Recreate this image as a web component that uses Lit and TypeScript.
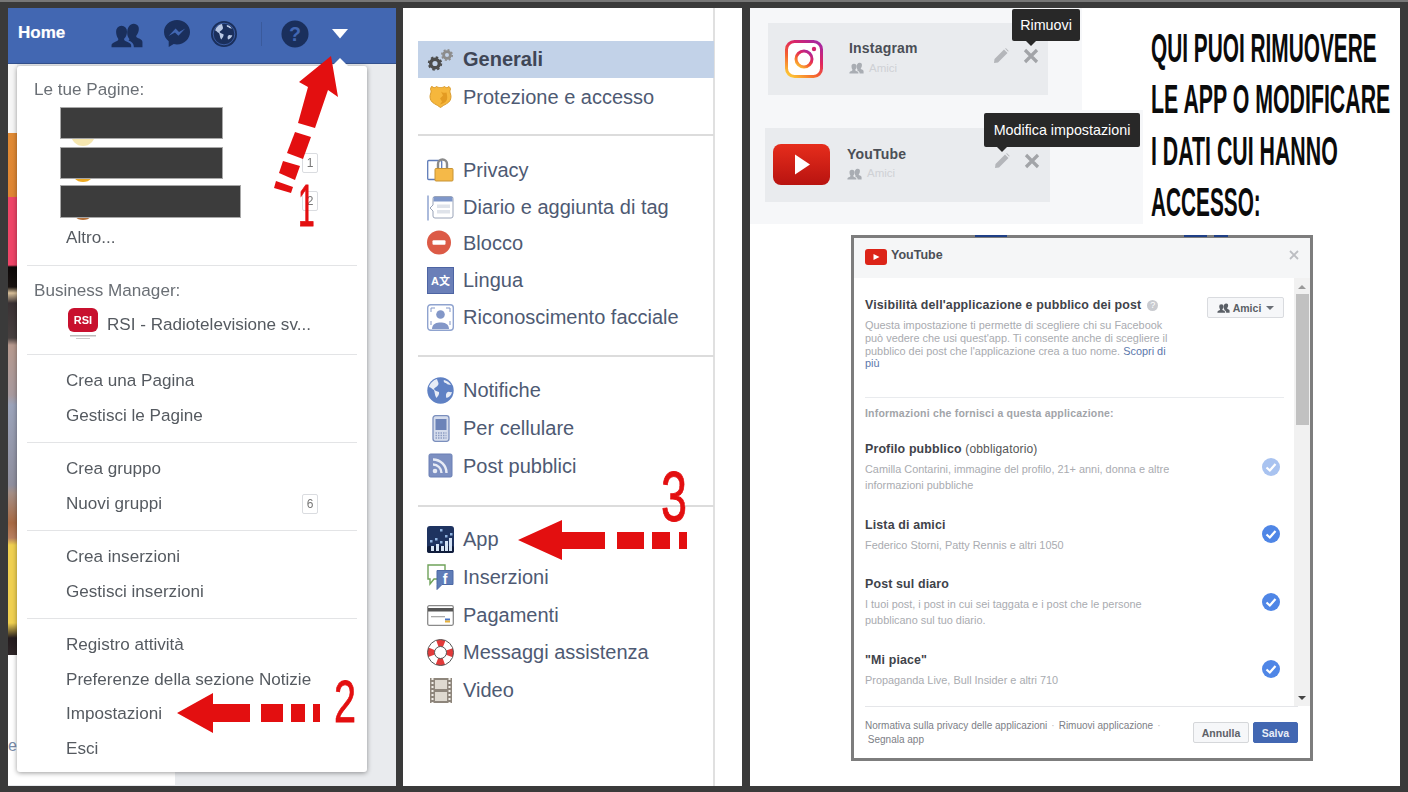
import { LitElement, html, css, svg } from "lit";
import { customElement } from "lit/decorators.js";

const DARK = "#1a2f5c";
const RED = "#e30f10";

const people = (c: string) => svg`<path fill=${c} d="M6 3.2a3 3 0 0 1 3 3.2c0 1.6-.8 3.2-1.5 3.8-.3.5 0 1 .6 1.3 1.7.7 3.2 1.2 3.2 2.6V15H.5v-.9c0-1.4 1.4-1.9 3-2.6.7-.3.9-.8.6-1.3C3.700 9.600 3 8 3 6.400a3 3 0 0 1 3-3.200z"/><path fill=${c} d="M12.700 2a2.700 2.700 0 0 1 2.800 3c0 1.500-.7 2.900-1.300 3.500-.3.400-.1 1 .5 1.200 1.400.600 2.800 1.100 2.800 2.400V15h-4.700c0-2-1.100-3-3-3.700.6-.3.6-.7.300-1.100-.7-.8-1-2-1-3.300C9.100 4.400 10.500 2 12.700 2z"/>`;

const ico = {
  friends: html`<svg class="hi" style="width:34px;height:28px" viewBox="0 0 18 15.400">${people(DARK)}</svg>`,
  msgr: html`<svg class="hi" viewBox="0 0 28 30"><path fill=${DARK} d="M14 1C6.800 1 1 6.400 1 13c0 3.700 1.800 7 4.700 9.200V28l5-2.900c1 .2 2.100.400 3.300.400 7.200 0 13-5.600 13-12.500S21.200 1 14 1z"/><path fill="#4267b2" d="M15.400 16.800 12 13.400 5.600 17l7-7.500 3.400 3.400 6.300-3.500z"/></svg>`,
  globe: html`<svg class="hi" viewBox="0 0 28 30"><circle cx="14" cy="15" r="13" fill=${DARK}/><circle cx="14" cy="15" r="10.800" fill="none" stroke="#4267b2" stroke-width=".8"/><path fill="#b9c8e4" d="M12 5c-3 .5-6 3-6.800 6.500 1.800.2 2 2 3.800 2.500 1.200 2.300.6 4.400 2.300 6.500 1-1.800 2.700-3 2.200-5.300-1.800-.8-3.300-.7-4-2.200 1-1.800 3.300-2 3.500-3.800.1-1.200-.7-2.300-1-4.200zM17 6c-.8 1.200.2 2.300 1.600 2.200.8 1.300 2.300 1 3.400 1.500-1-1.800-2.800-3.200-5-3.700zM19 16c-1.500.5-1.800 2.600-1 4.500 1.800-.4 3.800-2 4.300-4.200-1 .3-2.300-.7-3.300-.3z"/></svg>`,
  help: html`<svg class="hi" viewBox="0 0 30 30"><circle cx="15" cy="15" r="14.500" fill=${DARK}/><text x="15" y="22" text-anchor="middle" fill="#4267b2" font-family="Liberation Sans" font-weight="700" font-size="21">?</text></svg>`,
  caret: html`<svg style="width:16px;height:10px;display:block" viewBox="0 0 16 10"><path fill="#fff" d="M0 0h16L8 9.500z"/></svg>`,
  rsi: html`<svg class="rsi" viewBox="0 0 32 34"><rect x="1" y="0" width="30" height="24" rx="6" fill="#c8102e"/><text x="16" y="16" text-anchor="middle" fill="#fff" font-family="Liberation Sans" font-weight="700" font-size="11">RSI</text><rect x="3" y="27" width="26" height="1.500" fill="#bbb"/><rect x="9" y="30" width="14" height="1" fill="#ccc"/></svg>`,
  gears: html`<svg viewBox="0 0 27 24"><g fill="none"><circle cx="8" cy="16" r="4.300" stroke="#4d4d4d" stroke-width="3.400"/><circle cx="8" cy="16" r="6.300" stroke="#4d4d4d" stroke-width="1.800" stroke-dasharray="2.500 2.450"/><circle cx="20" cy="7.500" r="3.400" stroke="#8c8c8c" stroke-width="2.800"/><circle cx="20" cy="7.500" r="5.200" stroke="#8c8c8c" stroke-width="1.600" stroke-dasharray="2 2.080"/></g></svg>`,
  shield: html`<svg viewBox="0 0 27 26"><path fill="#f6b73c" stroke="#d99a2b" d="M5 2c1.500 1.500 3 1.500 4.500 0 1.500 1 2.500 1 4 1s2.500 0 4-1c1.500 1.500 3 1.500 4.500 0 1 1 1.500 2 1.500 3-1 1.500-.5 3 0 4.500.8 2 .5 4.500-.5 6.500-1.500 3-5 3.500-9.500 7-4.500-3.500-8-4-9.500-7-1-2-1.300-4.500-.5-6.500.5-1.500 1-3-.0-4.500 0-1 .5-2 1-3z"/><path fill="#e39b22" d="M14 7l2 4-3 3 2 3-2 3c3-1 6-2 7-5 .5-2 0-5-.5-7-2 .5-4 .5-5.500-1z"/></svg>`,
  lock: html`<svg viewBox="0 0 27 26"><rect x=".7" y="3" width="14" height="19" rx="1" fill="#fff" stroke="#5f7cb8" stroke-width="1.300"/><path fill="none" stroke="#8a8a8a" stroke-width="2.400" d="M11 12V6.500a4.500 4.500 0 0 1 9 0V12"/><rect x="8" y="11" width="18" height="12.500" rx="1" fill="#f5b948" stroke="#c79334"/></svg>`,
  timeline: html`<svg viewBox="0 0 27 26"><path stroke="#7f97c9" stroke-width="1.300" d="M1 1v25"/><path fill="#fff" stroke="#9aa4b8" d="M6 10.500 3 13.500l3 3V21.500a2 2 0 0 0 2 2h16a2 2 0 0 0 2-2V4a2 2 0 0 0-2-2H8a2 2 0 0 0-2 2z"/><path fill="#7f97c9" d="M6.500 2.500h19V7h-19z"/><path fill="#dfe3ea" d="M10 10h13v3.500H10zM10 15.500h13V19H10z"/></svg>`,
  block: html`<svg viewBox="0 0 27 26"><circle cx="12" cy="12" r="12" fill="#dc5a46"/><rect x="5.500" y="9.800" width="13" height="4.400" rx="1" fill="#fff"/></svg>`,
  lang: html`<svg viewBox="0 0 27 27"><rect x=".5" y=".5" width="26" height="26" fill="#6a7fb8" stroke="#4d64a3"/><text x="13.500" y="18" text-anchor="middle" fill="#fff" font-family="Liberation Sans, Noto Sans CJK SC, sans-serif" font-size="11" font-weight="700">A文</text></svg>`,
  face: html`<svg viewBox="0 0 27 27"><rect x=".7" y=".7" width="25.600" height="25.600" rx="3" fill="#fff" stroke="#8fa3cf" stroke-width="1.400"/><circle cx="13.500" cy="10.500" r="4.300" fill="#8397c8"/><path fill="#8397c8" d="M5 25c0-5.500 5-6.500 8.500-6.500S22 19.500 22 25z"/><path fill="none" stroke="#8397c8" d="M4 8V4h4M19 4h4v4M4 17v4M23 17v4"/></svg>`,
  globe2: html`<svg viewBox="0 0 27 27"><circle cx="13.500" cy="13.500" r="13.200" fill="#5f81c4"/><path fill="#fff" opacity=".85" d="M10 2c-3.500 1-7 4-8 8 2 0 3 2.500 5 3 1 3 .5 5 2.500 8 1.500-2 3-3.500 2.500-6-2-1-4-1-5-3 1-2 4-2.500 4.500-5 .1-1.500-1-3-1.500-5zM17 3c-1 1.500.5 3 2 3 1 1.500 3 1.500 5 2-1.500-2.500-4-4.500-7-5zM21 15c-2 .5-2.500 3.500-1.500 6 2.500-.5 5-3 5.500-6-1.500.5-3-.5-4 0z"/></svg>`,
  phone: html`<svg viewBox="0 0 27 27"><rect x="6" y=".7" width="16" height="25.600" rx="2.500" fill="#d5dcec" stroke="#7b8fbd" stroke-width="1.300"/><rect x="8.500" y="4" width="11" height="11" fill="#6c83b8"/><path stroke="#8c9cc2" stroke-width="1.500" stroke-dasharray="1.500 1" d="M8.500 18h11M8.500 20.500h11M8.500 23h11"/></svg>`,
  rss: html`<svg viewBox="0 0 27 27"><rect x="2" y="1" width="23" height="23" rx="1.500" fill="#7c8fc1" stroke="#6a7fb4"/><circle cx="8" cy="18" r="2.300" fill="#e7ebf5"/><path fill="none" stroke="#e7ebf5" stroke-width="2.400" d="M6 11.500a8.500 8.500 0 0 1 8.500 8.500M6 6.500A13.500 13.500 0 0 1 19.500 20"/></svg>`,
  app: html`<svg viewBox="0 0 27 27"><rect width="27" height="27" rx="3" fill="#1e3360"/><rect y="20" width="27" height="7" rx="2" fill="#101d3c"/><g fill="#8fb3e0"><rect x="3" y="14" width="2.500" height="2.500"/><rect x="8" y="12" width="2.500" height="2.500"/><rect x="13" y="15" width="2.500" height="2.500"/><rect x="18" y="9" width="2.500" height="2.500"/><rect x="13" y="3" width="2.500" height="2.500"/><rect x="23" y="7" width="2.500" height="2.500"/></g><g fill="#d5e3f4"><rect x="4" y="20" width="3" height="5"/><rect x="9" y="18" width="3" height="7"/><rect x="14" y="20" width="3" height="5"/><rect x="18" y="15" width="3" height="10"/><rect x="22" y="12" width="3" height="13"/></g></svg>`,
  ads: html`<svg viewBox="0 0 27 27"><path fill="#fff" stroke="#6fa25a" stroke-width="1.400" d="M1 1h17v14H7l-4 5V15H1z"/><path fill="#5f7db8" stroke="#4d69a5" d="M10 7h16v14H15l-5 5V21z" transform="translate(0 -.5)"/><text x="18" y="20" text-anchor="middle" fill="#fff" font-family="Liberation Sans" font-weight="700" font-size="14">f</text></svg>`,
  card: html`<svg viewBox="0 0 27 21"><rect x=".7" y=".7" width="25.600" height="19.600" rx="1.500" fill="#fff" stroke="#8a8a8a" stroke-width="1.300"/><rect x="1" y="3" width="25" height="3.500" fill="#555"/><rect x="4" y="11" width="14" height="1.300" fill="#aaa"/><rect x="18" y="13.500" width="5" height="2" fill="#4a75c4"/><rect x="18" y="15.500" width="5" height="2" fill="#e8b23a"/></svg>`,
  buoy: html`<svg viewBox="0 0 27 27"><circle cx="13.500" cy="13.500" r="9.500" fill="none" stroke="#fff" stroke-width="7"/><circle cx="13.500" cy="13.500" r="9.500" fill="none" stroke="#e23a3a" stroke-width="7" stroke-dasharray="7 7.920" stroke-dashoffset="3.500"/><circle cx="13.500" cy="13.500" r="13" fill="none" stroke="#555" stroke-width="1"/><circle cx="13.500" cy="13.500" r="6" fill="none" stroke="#555" stroke-width="1"/></svg>`,
  film: html`<svg viewBox="0 0 27 27"><rect x="3" y="1" width="22" height="25" fill="#8e867c"/><path fill="#ded9d0" d="M8 3h12v9H8zM8 15h12v9H8z"/><path stroke="#f3f0ea" stroke-width="2" stroke-dasharray="2 2" d="M5.500 1v25M22.500 1v25"/></svg>`,
  pencil: html`<svg viewBox="0 0 16 16"><path fill="#b4b6ba" d="M11 1.500 14.500 5 5 14.500 1 15l.5-4zM12 .5l1-.3 2.500 2.500-.3 1z"/></svg>`,
  close: html`<svg viewBox="0 0 16 16"><path stroke="#a2a4a8" stroke-width="3.200" d="M2 2l12 12M14 2 2 14"/></svg>`,
  insta: html`<svg class="appicon" viewBox="0 0 38 38"><defs><linearGradient id="ig" x1=".15" y1="1" x2=".85" y2="0"><stop offset="0" stop-color="#fdc234"/><stop offset=".35" stop-color="#f4612f"/><stop offset=".65" stop-color="#e0265f"/><stop offset="1" stop-color="#a8269f"/></linearGradient></defs><rect x="1.500" y="1.500" width="35" height="35" rx="8" fill="#fff" stroke="url(#ig)" stroke-width="3"/><circle cx="19" cy="19" r="8" fill="none" stroke="url(#ig)" stroke-width="3"/><circle cx="29" cy="9" r="2.200" fill="#d3246f"/></svg>`,
  yt: html`<svg class="appicon" viewBox="0 0 57 41"><defs><linearGradient id="yg" x1="0" y1="0" x2="0" y2="1"><stop offset="0" stop-color="#e62d1c"/><stop offset="1" stop-color="#b81310"/></linearGradient></defs><rect width="57" height="41" rx="8" fill="url(#yg)"/><path fill="#fff" d="M22 10.500 37 20.500 22 30.500z"/></svg>`,
  ytS: html`<svg class="yts" viewBox="0 0 22 16"><rect width="22" height="16" rx="3" fill="#dc2418"/><path fill="#fff" d="M8.500 5l6 3-6 3z"/></svg>`,
};

const badge = (n: string) => html`<span class="badge">${n}</span>`;

@customElement("fb-menu")
class FbMenu extends LitElement {
  static styles = css`
    :host { display: block; position: relative; height: 100%; background: #e9ebee; overflow: hidden; font-family: "Liberation Sans", Arial, sans-serif; }
    .bar { height: 56px; background: #4267b2; display: flex; align-items: center; padding: 0 0 4px 10px; box-sizing: border-box; box-shadow: inset 0 -1px 0 #34528f; }
    .home { color: #fff; font-weight: 700; font-size: 17px; width: 92px; -webkit-text-stroke: .2px #fff; margin-top: -3px; }
    .hi { width: 28px; height: 30px; display: block; flex: none; }
    .bar .hi + .hi { margin-left: 19px; }
    .sep { width: 1px; height: 24px; background: #3a5a9c; margin: 0 19px 0 23px; }
    .caret { margin-left: 23px; }
    .stage { display: flex; height: 721px; position: relative; }
    .strip { width: 9px; height: 591px; flex: none;
      background: linear-gradient(180deg, #f6f6f6 0, #f6f6f6 69px, #e08a34 69px, #df8633 133px, #ee4568 133px, #ee4568 201px, #0c0808 203px, #1a1412 223px, #d9c09a 229px, #3a3234 239px, #47403f 274px, #b79a8f 281px, #a89a9e 331px, #9ca4bb 341px, #8f8f9e 421px, #a58f86 429px, #a86a44 459px, #b98060 474px, #f0d050 481px, #f0d050 559px, #241c1e 574px, #2e2628 591px); }
    .foot { position: absolute; left: 0; bottom: 0; width: 167px; height: 130px; background: #fff; color: #7a8ba8; font-size: 16px; padding-top: 82px; box-sizing: border-box; }
    .menu { position: absolute; left: 9px; top: 2px; width: 350px; height: 706px; background: #fff; border-radius: 3px; box-shadow: 0 1px 5px rgba(0,0,0,.4); color: #555a60; font-size: 17.100px; z-index: 1; }
    .notch { position: absolute; left: 315px; top: -8px; border: 8px solid transparent; border-top: 0; border-bottom-color: #fff; }
    .sec { margin: 0 10px; padding: 9px 0; border-bottom: 1px solid #e3e4e6; }
    .sec:last-child { border-bottom: 0; padding-bottom: 7px; }
    .s1 { padding: 7px 0 9px; }
    .s2 { padding: 8px 0 12px; }
    .hd { height: 34px; line-height: 34px; padding-left: 7px; color: #6a6f75; }
    .row { height: 34.500px; display: flex; align-items: center; justify-content: space-between; padding-left: 39px; padding-right: 39px; white-space: nowrap; }
    .pg { display: flex; align-items: center; justify-content: space-between; padding: 0 39px 0 34px; position: relative; }
    .pg i { display: block; background: #3c3c3c; outline: 1px solid #a8a8a8; height: 30px; position: relative; z-index: 1; }
    .av { position: absolute; left: 44px; top: 50%; width: 24px; height: 24px; border-radius: 50%; }
    .badge { display: block; width: 16px; height: 20px; line-height: 19px; box-sizing: border-box; border: 1px solid #dadce0; border-radius: 2px; text-align: center; font-size: 12px; color: #777; }
    .rsi { width: 32px; height: 34px; flex: none; margin-right: 8px; margin-left: -1px; }
    .rs { justify-content: flex-start; padding-left: 41px; padding-right: 0; }
  `;
  render() {
    return html`
      <div class="bar">
        <span class="home">Home</span>
        ${ico.friends}${ico.msgr}${ico.globe}
        <span class="sep"></span>
        ${ico.help}
        <span class="caret">${ico.caret}</span>
      </div>
      <div class="stage">
        <div class="strip"></div>
        <div class="foot">e</div>
        <div class="menu">
          <span class="notch"></span>
          <div class="sec s1">
            <div class="hd">Le tue Pagine:</div>
            <div class="pg" style="height:31px"><span class="av" style="background:#f6e7b0;margin-top:-1px"></span><i style="width:161px"></i></div>
            <div class="pg" style="height:30px;margin-top:10px"><span class="av" style="background:#eeaa22;margin-top:-5px"></span><i style="width:161px"></i>${badge("1")}</div>
            <div class="pg" style="height:32px;margin-top:7px"><span class="av" style="background:#b5713a;margin-top:-5px"></span><i style="width:179px;height:31px"></i>${badge("2")}</div>
            <div class="row" style="margin-top:4px">Altro...</div>
          </div>
          <div class="sec s2">
            <div class="hd">Business Manager:</div>
            <div class="row rs">${ico.rsi}RSI - Radiotelevisione sv...</div>
          </div>
          <div class="sec"><div class="row">Crea una Pagina</div><div class="row">Gestisci le Pagine</div></div>
          <div class="sec"><div class="row">Crea gruppo</div><div class="row">Nuovi gruppi ${badge("6")}</div></div>
          <div class="sec"><div class="row">Crea inserzioni</div><div class="row">Gestisci inserzioni</div></div>
          <div class="sec">
            <div class="row">Registro attività</div>
            <div class="row">Preferenze della sezione Notizie</div>
            <div class="row">Impostazioni</div>
            <div class="row">Esci</div>
          </div>
        </div>
      </div>`;
  }
}

@customElement("fb-side")
class FbSide extends LitElement {
  static styles = css`
    :host { display: block; height: 100%; background: #fff; font-family: "Liberation Sans", Arial, sans-serif; }
    .nav { margin-left: 15px; width: 297px; height: 100%; box-sizing: border-box; border-right: 2px solid #e0e0e0; padding-top: 33px; font-size: 20px; color: #4e5a73; }
    .sec { border-bottom: 2px solid #dcdcdc; padding: 15px 0 19px; margin-right: -1px; }
    .sec:first-child { padding-top: 0; padding-bottom: 18px; }
    .sec:last-child { border-bottom: 0; padding-top: 14px; }
    .row { display: flex; align-items: center; gap: 9px; padding-left: 9px; height: var(--h, 37.500px); white-space: nowrap; }
    .row svg { width: 27px; height: 27px; flex: none; display: block; }
    .on { background: #c2d2e8; font-weight: 700; color: #3f4656; height: 36.500px; margin-bottom: 1px; margin-right: 0; }
  `;
  private r(i: unknown, t: string, c = "") {
    return html`<div class="row ${c}">${i}<span>${t}</span></div>`;
  }
  render() {
    return html`<div class="nav">
      <div class="sec">
        ${this.r(ico.gears, "Generali", "on")}
        ${this.r(ico.shield, "Protezione e accesso")}
      </div>
      <div class="sec" style="--h:36.750px;padding-top:16px">
        ${this.r(ico.lock, "Privacy")}
        ${this.r(ico.timeline, "Diario e aggiunta di tag")}
        ${this.r(ico.block, "Blocco")}
        ${this.r(ico.lang, "Lingua")}
        ${this.r(ico.face, "Riconoscimento facciale")}
      </div>
      <div class="sec" style="--h:38px">
        ${this.r(ico.globe2, "Notifiche")}
        ${this.r(ico.phone, "Per cellulare")}
        ${this.r(ico.rss, "Post pubblici")}
      </div>
      <div class="sec" style="--h:37.750px">
        ${this.r(ico.app, "App")}
        ${this.r(ico.ads, "Inserzioni")}
        ${this.r(ico.card, "Pagamenti")}
        ${this.r(ico.buoy, "Messaggi assistenza")}
        ${this.r(ico.film, "Video")}
      </div>
    </div>`;
  }
}

const check = (top: number, light = false) => html`<svg class="chk" style="top:${top}px" viewBox="0 0 18 18"><circle cx="9" cy="9" r="9" fill=${light ? "#a9c3f0" : "#4f86e6"}/><path fill="none" stroke="#fff" stroke-width="2.200" d="M4.500 9.500 7.800 12.500 13.500 6"/></svg>`;

@customElement("fb-apps")
class FbApps extends LitElement {
  static styles = css`
    :host { display: block; position: relative; height: 100%; background: #fff; font-family: "Liberation Sans", Arial, sans-serif; overflow: hidden; }
    .top { display: flex; height: 216px; }
    .apps { width: 393px; flex: none; }
    .r1 { width: 332px; height: 102px; background: #f6f7f9; padding: 15px 0 0 18px; box-sizing: border-box; }
    .r2 { height: 114px; background: #f6f7f9; padding: 18px 0 0 15px; box-sizing: border-box; }
    .card { background: #e9ebee; display: flex; align-items: center; position: relative; box-sizing: border-box; }
    .c1 { width: 280px; height: 72px; padding-left: 17px; }
    .c2 { width: 285px; height: 74px; padding-left: 8px; }
    .appicon { display: block; flex: none; }
    .c1 .appicon { width: 38px; height: 38px; margin-right: 26px; }
    .c2 .appicon { width: 57px; height: 41px; margin: -2px 17px 0 0; }
    .info { flex: 1; padding-bottom: 4px; }
    .name { font-size: 14px; font-weight: 700; color: #4b4f56; letter-spacing: .2px; line-height: 16px; }
    .aud { display: flex; align-items: center; gap: 5px; color: #cfd1d5; font-size: 11.500px; margin-top: 5px; height: 14px; }
    .c2 .aud { margin-top: 4px; }
    .aud svg { width: 15px; height: 13px; }
    .acts { display: flex; gap: 14px; margin-right: 9px; margin-top: -7px; }
    .c2 .acts { margin-right: 10px; margin-top: -9px; }
    .acts svg { width: 16px; height: 16px; display: block; }
    .tip { position: absolute; background: #282828; color: #fff; font-size: 14.300px; border-radius: 2px; white-space: nowrap; display: flex; align-items: center; justify-content: center; z-index: 2; }
    .tip::after { content: ""; position: absolute; top: 100%; border: 5px solid transparent; border-bottom: 0; border-top-color: #282828; }
    .t1 { left: 262px; top: 1px; width: 68px; height: 32px; }
    .t1::after { left: 14px; }
    .t2 { left: 234px; top: 105px; width: 156px; height: 34px; }
    .t2::after { left: 13px; }
    .say { padding: 15px 0 0 8px; color: #0b0b0b; font-weight: 700; font-size: 41px; line-height: 51.300px; white-space: nowrap; }
    .say div { transform-origin: 0 50%; height: 51.300px; }

    .dlg { position: relative; margin: 11px 0 0 101px; width: 462px; height: 526px; box-sizing: border-box; border: 3px solid #7d7d7d; background: #fff; display: flex; flex-direction: column; color: #4b4f56; }
    .dlg::before { content: ""; position: absolute; left: 121px; top: -3px; width: 253px; height: 2px; background: linear-gradient(90deg, #1f3f86 0 32px, transparent 32px 209px, #1f3f86 209px 232px, transparent 232px 239px, #1f3f86 239px); }
    .dh { height: 40px; flex: none; background: #f5f6f7; display: flex; align-items: center; gap: 4px; padding: 0 11px 6px; box-sizing: border-box; font-size: 12.500px; font-weight: 700; color: #4b4f56; }
    .yts { width: 22px; height: 16px; display: block; flex: none; margin-top: 4px; }
    .dh .x { margin-left: auto; width: 10px; height: 10px; }
    .dh .x svg { display: block; width: 10px; height: 10px; }
    .db { flex: 1; display: flex; min-height: 0; }
    .dc { flex: 1; padding: 0 10px 0 11px; min-width: 0; font-size: 10.900px; color: #a9abb0; }
    .sb { width: 16px; flex: none; background: #f1f1f1; position: relative; display: flex; flex-direction: column; align-items: center; }
    .sb .th { width: 13px; height: 131px; background: #c1c1c1; margin-top: 5px; }
    .sb .up { margin-top: 7px; border: 4px solid transparent; border-top: 0; border-bottom: 4px solid #999; }
    .sb .dn { margin-top: auto; margin-bottom: 6px; border: 4px solid transparent; border-bottom: 0; border-top: 4px solid #444; }
    .vis { display: flex; justify-content: space-between; padding-top: 19px; height: 120px; box-sizing: border-box; border-bottom: 1px solid #e9ebee; }
    .b { font-size: 12.400px; font-weight: 700; color: #3f434a; letter-spacing: .15px; line-height: 16px; }
    .vis .b { display: flex; align-items: center; gap: 6px; }
    .q { width: 11px; height: 11px; border-radius: 50%; background: #c9cbd0; color: #fff; font-size: 9px; line-height: 11px; text-align: center; font-weight: 400; }
    .desc { line-height: 12.800px; margin-top: 6px; white-space: nowrap; }
    .desc a { color: #5c77ab; }
    .sel { width: 77px; height: 21px; box-sizing: border-box; border: 1px solid #d9dbdf; border-radius: 2px; background: #f6f7f9; font-size: 10.500px; font-weight: 700; color: #5a5f66; display: flex; align-items: center; justify-content: center; gap: 3px; flex: none; }
    .sel svg { width: 13px; height: 11px; }
    .sel em { border: 4px solid transparent; border-bottom: 0; border-top-color: #6a6f76; margin-top: 1px; margin-left: 2px; }
    .lab { font-size: 10.500px; font-weight: 700; color: #a2a4a9; margin-top: 8px; line-height: 14px; letter-spacing: .2px; }
    .it { position: relative; }
    .it .b span { font-weight: 400; font-size: 12px; color: #555; }
    .it p { margin: 4px 0 0; line-height: 16px; }
    .chk { position: absolute; right: 4px; width: 18px; height: 18px; display: block; }
    .df { height: 52px; flex: none; margin-left: 11px; margin-right: 12px; border-top: 1px solid #e5e6e9; display: flex; box-sizing: border-box; justify-content: space-between; font-size: 10px; color: #7d8086; }
    .links { padding-top: 12px; line-height: 14px; white-space: nowrap; }
    .links span { margin: 0 4px; color: #bbb; }
    .btns { display: flex; gap: 4px; padding-top: 15px; }
    .btn { height: 21px; box-sizing: border-box; border: 1px solid #d5d7da; border-radius: 2px; background: #f6f7f9; color: #5d6168; font-size: 10.500px; font-weight: 700; display: flex; align-items: center; justify-content: center; width: 56px; }
    .btn.p { background: #4267b2; border-color: #4267b2; color: #e8edf7; width: 45px; }
  `;
  render() {
    const lines: [string, number][] = [["QUI PUOI RIMUOVERE", 0.508], ["LE APP O MODIFICARE", 0.52], ["I DATI CUI HANNO", 0.52], ["ACCESSO:", 0.507]];
    return html`
      <div class="top">
        <div class="apps">
          <div class="r1">
            <div class="card c1">
              ${ico.insta}
              <div class="info"><div class="name">Instagram</div><div class="aud"><svg viewBox="0 0 18 15.400">${people("#a9adb3")}</svg>Amici</div></div>
              <div class="acts">${ico.pencil}${ico.close}</div>
            </div>
          </div>
          <div class="r2">
            <div class="card c2">
              ${ico.yt}
              <div class="info"><div class="name">YouTube</div><div class="aud"><svg viewBox="0 0 18 15.400">${people("#a9adb3")}</svg>Amici</div></div>
              <div class="acts">${ico.pencil}${ico.close}</div>
            </div>
          </div>
        </div>
        <div class="say">${lines.map(([t, s]) => html`<div style="transform:scaleX(${s})">${t}</div>`)}</div>
      </div>
      <div class="tip t1">Rimuovi</div>
      <div class="tip t2">Modifica impostazioni</div>
      <div class="dlg">
        <div class="dh">${ico.ytS}<span>YouTube</span><span class="x"><svg viewBox="0 0 10 10"><path stroke="#bcbec2" stroke-width="1.800" d="M1 1l8 8M9 1 1 9"/></svg></span></div>
        <div class="db">
          <div class="dc">
            <div class="vis">
              <div>
                <div class="b">Visibilità dell'applicazione e pubblico dei post <span class="q">?</span></div>
                <div class="desc">Questa impostazione ti permette di scegliere chi su Facebook<br>può vedere che usi quest'app. Ti consente anche di scegliere il<br>pubblico dei post che l'applicazione crea a tuo nome. <a>Scopri di<br>più</a></div>
              </div>
              <div class="sel"><svg viewBox="0 0 18 15.400">${people("#5a5f66")}</svg>Amici<em></em></div>
            </div>
            <div class="lab">Informazioni che fornisci a questa applicazione:</div>
            <div class="it" style="margin-top:21px;height:76px">
              <div class="b">Profilo pubblico <span>(obbligatorio)</span></div>
              <p>Camilla Contarini, immagine del profilo, 21+ anni, donna e altre<br>informazioni pubbliche</p>
              ${check(17, true)}
            </div>
            <div class="it" style="height:59px">
              <div class="b">Lista di amici</div>
              <p>Federico Storni, Patty Rennis e altri 1050</p>
              ${check(8)}
            </div>
            <div class="it" style="height:76px">
              <div class="b">Post sul diaro</div>
              <p>I tuoi post, i post in cui sei taggata e i post che le persone<br>pubblicano sul tuo diario.</p>
              ${check(17)}
            </div>
            <div class="it">
              <div class="b">"Mi piace"</div>
              <p>Propaganda Live, Bull Insider e altri 710</p>
              ${check(8)}
            </div>
          </div>
          <div class="sb"><i class="up"></i><i class="th"></i><i class="dn"></i></div>
        </div>
        <div class="df">
          <div class="links">Normativa sulla privacy delle applicazioni<span>·</span>Rimuovi applicazione<span>·</span><br>&nbsp;Segnala app</div>
          <div class="btns"><div class="btn">Annulla</div><div class="btn p">Salva</div></div>
        </div>
      </div>`;
  }
}

@customElement("app-root")
class AppRoot extends LitElement {
  static styles = css`
    :host { display: block; width: 1408px; height: 792px; overflow: hidden; position: relative; background: #3a3a3a; }
    .wrap { display: grid; grid-template-columns: 388px 339px 651px; column-gap: 7px; height: 792px; box-sizing: border-box; padding: 8px 0 6px 8px; filter: blur(.55px); }
    .wrap > :last-child { margin-left: 1px; }
    .over { position: absolute; left: 0; top: 0; width: 1408px; height: 792px; pointer-events: none; filter: blur(.3px); }
    .over text { font-family: "Liberation Sans", Arial, sans-serif; fill: #e30f10; stroke: #e30f10; stroke-width: .8px; }
    .edge { position: absolute; left: 0; top: 0; width: 100%; height: 2px; background: #777; }
  `;
  render() {
    return html`
      <div class="edge"></div>
      <div class="wrap"><fb-menu></fb-menu><fb-side></fb-side><fb-apps></fb-apps></div>
      <svg class="over" viewBox="0 0 1408 792" fill=${RED}>
        <path d="M331 56 299 82 308 87 298 123 315 128 328 90 338 97z"/>
        <path d="M295 132 311 137 303 159 287 153z"/>
        <path d="M283 161 300 166 295 180 279 173z"/>
        <path d="M276 181 293 187 291 193 274 188z"/>
        <text transform="translate(298 226) scale(.5 1)" font-size="60">1</text>
        <path d="M177 713 213 693V704H250V722H213V733z"/>
        <rect x="261" y="704" width="22" height="18"/><rect x="291" y="704" width="14" height="18"/><rect x="313" y="704" width="7" height="18"/>
        <text transform="translate(334 722) scale(.66 1)" font-size="60">2</text>
        <path d="M518 540 562 520V532H605V549H562V560z"/>
        <rect x="617" y="532" width="27" height="17"/><rect x="652" y="532" width="18" height="17"/><rect x="679" y="532" width="8" height="17"/>
        <text transform="translate(661 521) scale(.66 1)" font-size="71">3</text>
      </svg>`;
  }
}
